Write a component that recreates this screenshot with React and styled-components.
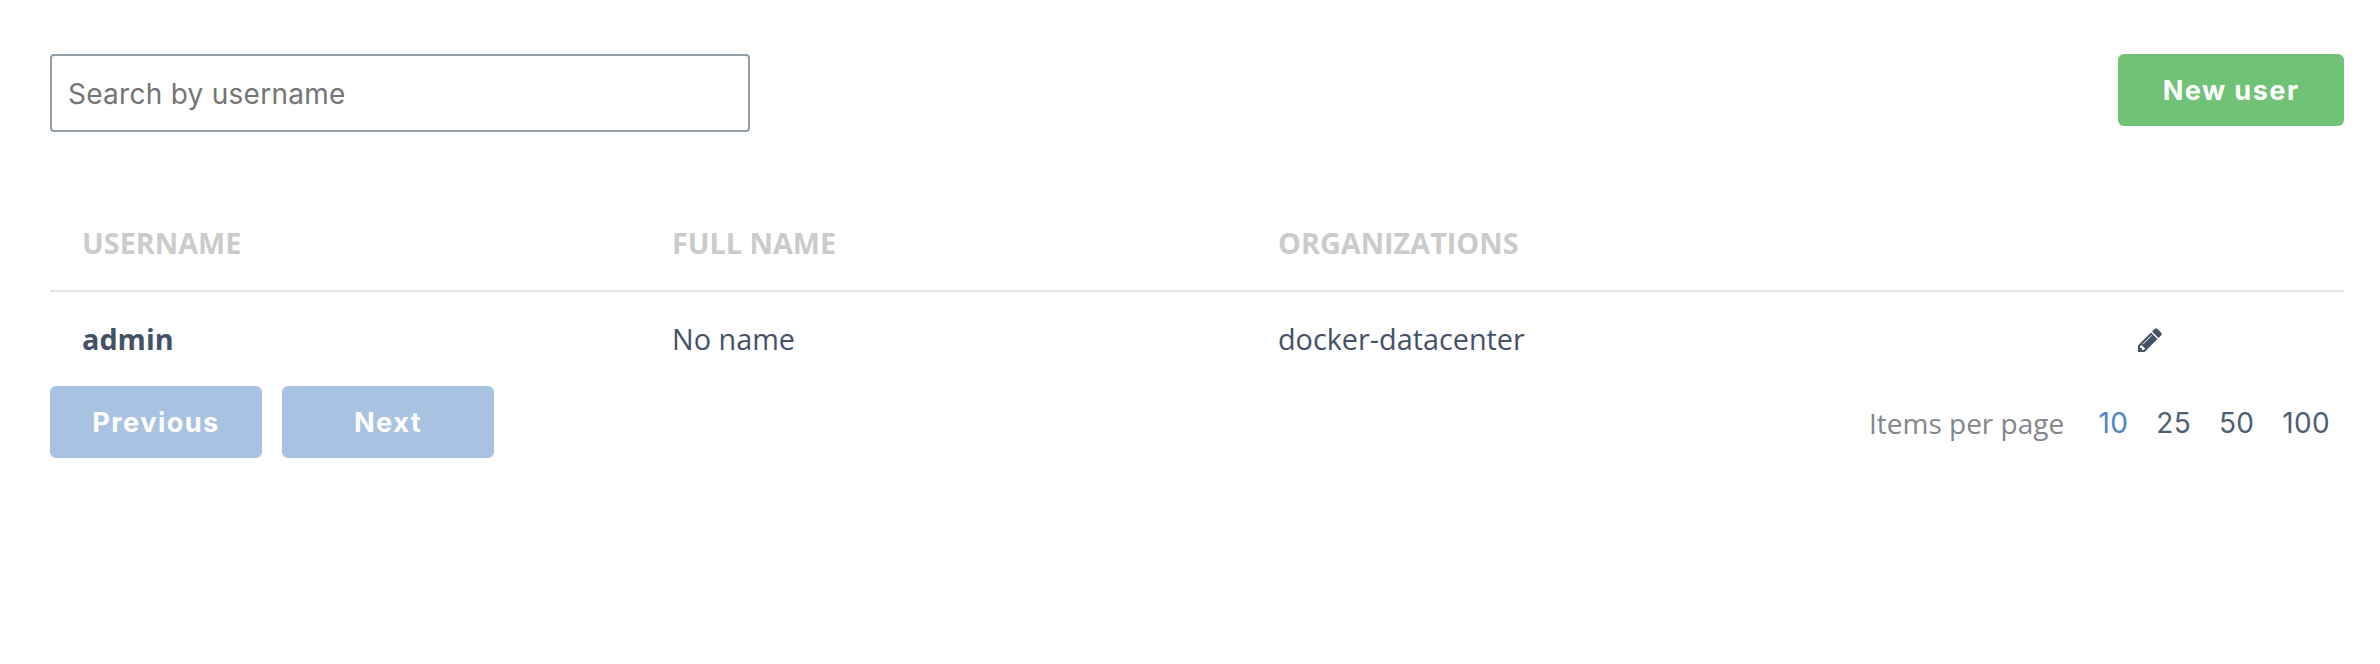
import React from "react";
import styled, { createGlobalStyle } from "styled-components";

const GlobalStyle = createGlobalStyle`
  *, *::before, *::after { box-sizing: border-box; }
  body {
    margin: 0;
    background: #fff;
    color: #445268;
    font-family: "Open Sans", sans-serif;
    font-size: 28.8px;
  }
`;

const Page = styled.main`
  min-height: 664px;
  padding: 54px 36px 0 50px;
`;

const Toolbar = styled.div`
  display: flex;
  justify-content: space-between;
  align-items: flex-start;
  margin-bottom: 64px;
`;

const SearchInput = styled.input`
  width: 700px;
  height: 78px;
  padding: 2px 16px 0;
  border: 2px solid #919ca5;
  border-radius: 4px;
  outline: none;
  background: #fff;
  color: #445268;
  font: 400 28px Inter, sans-serif;
  letter-spacing: 0.27px;

  &::placeholder {
    color: #757575;
    opacity: 1;
  }
`;

const Button = styled.button`
  width: ${({ $variant }) => ($variant === "success" ? 226 : 212)}px;
  height: 72px;
  padding: 0;
  border: 0;
  border-radius: 6px;
  background: ${({ $variant }) => ($variant === "success" ? "#6fc276" : "#a8c2e1")};
  color: #fff;
  font: 700 27.2px Inter, sans-serif;
  letter-spacing: 1.4px;
`;

const Table = styled.div`
  display: grid;
`;

const Row = styled.div`
  display: grid;
  grid-template-columns: 590px 606px 858px 1fr;
  align-items: center;
  height: ${({ $head }) => ($head ? 96 : 94)}px;
  border-bottom: ${({ $head }) => ($head ? "2px solid #dfe4e8" : "0")};
`;

const HeaderCell = styled.div`
  padding: 0 32px 2px;
  color: #cbcbcb;
  font-weight: 700;
  text-transform: uppercase;
`;

const Cell = styled.div`
  padding: 0 32px 2px;
  font-weight: ${({ $strong }) => ($strong ? 700 : 400)};
`;

const ActionCell = styled.div`
  padding: 2px 32px 0;
`;

const EditButton = styled.button`
  display: block;
  padding: 0;
  border: 0;
  background: none;
  color: #445268;

  svg {
    display: block;
    width: 28px;
    height: 28px;
    fill: currentColor;
  }
`;

const Footer = styled.div`
  display: flex;
  justify-content: space-between;
  align-items: center;
`;

const Pager = styled.div`
  display: flex;
  gap: 20px;
`;

const PageSizes = styled.div`
  display: flex;
  align-items: center;
`;

const PageSizeLabel = styled.span`
  margin-right: 20.5px;
  padding-top: 2px;
  color: #82878c;
  font-size: 28px;
`;

const PageSize = styled.button`
  padding: 1px 13.9px 0;
  border: 0;
  background: none;
  color: ${({ $active }) => ($active ? "#4a86c8" : "#4f5f73")};
  font: 400 28px Inter, sans-serif;
  letter-spacing: 0.4px;
`;

const users = [{ username: "admin", fullName: "No name", organizations: "docker-datacenter" }];
const sizes = [10, 25, 50, 100];

const PencilIcon = () => (
  <svg viewBox="0 0 1792 1792" aria-hidden="true">
    <path d="M491 1536l91-91-235-235-91 91v107h128v128h107zm523-928q0-22-22-22-10 0-17 7l-542 542q-7 7-7 17 0 22 22 22 10 0 17-7l542-542q7-7 7-17zm-54-192l416 416-832 832h-416v-416zm683 96q0 53-37 90l-166 166-416-416 166-165q36-38 90-38 53 0 91 38l235 234q37 39 37 91z" />
  </svg>
);

export default function App() {
  return (
    <Page>
      <GlobalStyle />
      <Toolbar>
        <SearchInput placeholder="Search by username" />
        <Button $variant="success">New user</Button>
      </Toolbar>
      <Table>
        <Row $head>
          <HeaderCell>Username</HeaderCell>
          <HeaderCell>Full name</HeaderCell>
          <HeaderCell>Organizations</HeaderCell>
        </Row>
        {users.map((user) => (
          <Row key={user.username}>
            <Cell $strong>{user.username}</Cell>
            <Cell>{user.fullName}</Cell>
            <Cell>{user.organizations}</Cell>
            <ActionCell>
              <EditButton aria-label="Edit">
                <PencilIcon />
              </EditButton>
            </ActionCell>
          </Row>
        ))}
      </Table>
      <Footer>
        <Pager>
          <Button>Previous</Button>
          <Button>Next</Button>
        </Pager>
        <PageSizes>
          <PageSizeLabel>Items per page</PageSizeLabel>
          {sizes.map((size) => (
            <PageSize key={size} $active={size === 10}>
              {size}
            </PageSize>
          ))}
        </PageSizes>
      </Footer>
    </Page>
  );
}
